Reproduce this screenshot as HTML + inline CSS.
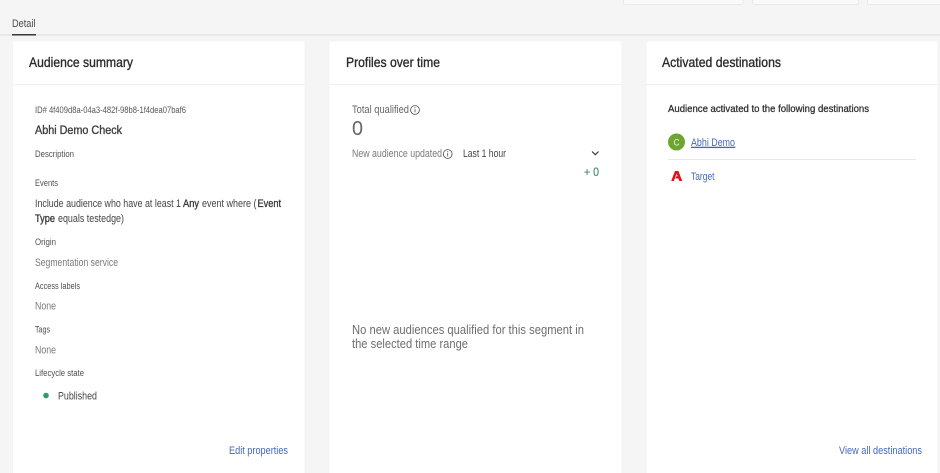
<!DOCTYPE html>
<html lang="en">
<head>
<meta charset="utf-8">
<title>Audience detail</title>
<style>
html,body{margin:0;padding:0;background:#f5f5f5;width:940px;height:473px;overflow:hidden}
svg{display:block;position:absolute;left:0;top:0}
text{font-family:"Liberation Sans",sans-serif;white-space:pre}
.t{filter:blur(.35px)}
.h{font-size:14px;fill:#2c2c2c;stroke:#2c2c2c;stroke-width:.35}
.l{font-size:9.6px;fill:#4f4f4f}
.v{font-size:10.8px;fill:#7a7a7a}
.b{font-size:10.8px;fill:#444}
.m{font-size:10.8px;fill:#3c3c3c;stroke:#3c3c3c;stroke-width:.35}
.a{font-size:10.6px;fill:#4668b8}
</style>
</head>
<body>
<svg width="940" height="473" viewBox="0 0 940 473" xmlns="http://www.w3.org/2000/svg">
  <rect width="940" height="473" fill="#f5f5f5"/>

  <!-- top controls -->
  <rect x="623.5" y="-6" width="119.5" height="10.5" rx="2" fill="#fafafa" stroke="#e9e9e9"/>
  <rect x="752.5" y="-6" width="106" height="10.5" rx="2" fill="#fafafa" stroke="#e9e9e9"/>
  <rect x="867.5" y="-6" width="80" height="10.5" rx="2" fill="#fafafa" stroke="#e9e9e9"/>

  <!-- tab bar -->
  <rect x="0" y="34" width="940" height="2" fill="#e9e9e9"/>
  <rect x="12" y="34" width="24" height="1.5" fill="#3a3a3a"/>

  <!-- cards -->
  <rect x="12.5" y="41" width="292.5" height="440" rx="2" fill="#fff" stroke="#efefef" stroke-width=".6"/>
  <rect x="329" y="41" width="293" height="440" rx="2" fill="#fff" stroke="#efefef" stroke-width=".6"/>
  <rect x="646" y="41" width="292" height="440" rx="2" fill="#fff" stroke="#efefef" stroke-width=".6"/>
  <rect x="13" y="84" width="292" height="1" fill="#f0f0f0"/>
  <rect x="329" y="84" width="293" height="1" fill="#f0f0f0"/>
  <rect x="646" y="84" width="292" height="1" fill="#f0f0f0"/>

  <g class="t">
    <text x="12" y="27" font-size="11" fill="#4a4a4a" textLength="23.5" lengthAdjust="spacingAndGlyphs">Detail</text>

    <!-- Audience summary -->
    <text class="h" x="29" y="67" textLength="104" lengthAdjust="spacingAndGlyphs">Audience summary</text>
    <text x="35" y="113" font-size="9.2" fill="#555" textLength="151" lengthAdjust="spacingAndGlyphs">ID# 4f409d8a-04a3-482f-98b8-1f4dea07baf6</text>
    <text x="35" y="134" font-size="11.5" fill="#3e3e3e" stroke="#3e3e3e" stroke-width=".35" textLength="87" lengthAdjust="spacingAndGlyphs">Abhi Demo Check</text>
    <text class="l" x="35" y="157" textLength="39" lengthAdjust="spacingAndGlyphs">Description</text>
    <text class="l" x="35" y="186" textLength="23" lengthAdjust="spacingAndGlyphs">Events</text>
    <text class="b" x="35" y="207" textLength="146" lengthAdjust="spacingAndGlyphs">Include audience who have at least 1</text>
    <text class="m" x="183" y="207" textLength="16" lengthAdjust="spacingAndGlyphs">Any</text>
    <text class="b" x="202" y="207" textLength="54.5" lengthAdjust="spacingAndGlyphs">event where (</text>
    <text class="m" x="257.5" y="207" textLength="23.5" lengthAdjust="spacingAndGlyphs">Event</text>
    <text class="m" x="35" y="222" textLength="20" lengthAdjust="spacingAndGlyphs">Type</text>
    <text class="b" x="58" y="222" textLength="66" lengthAdjust="spacingAndGlyphs">equals testedge)</text>
    <text class="l" x="35" y="245" textLength="21" lengthAdjust="spacingAndGlyphs">Origin</text>
    <text class="v" x="35" y="266" textLength="83" lengthAdjust="spacingAndGlyphs">Segmentation service</text>
    <text class="l" x="35" y="289" textLength="45" lengthAdjust="spacingAndGlyphs">Access labels</text>
    <text class="v" x="35" y="309.5" textLength="21" lengthAdjust="spacingAndGlyphs">None</text>
    <text class="l" x="35" y="332.5" textLength="15" lengthAdjust="spacingAndGlyphs">Tags</text>
    <text class="v" x="35" y="353.5" textLength="21" lengthAdjust="spacingAndGlyphs">None</text>
    <text class="l" x="35" y="376" textLength="49" lengthAdjust="spacingAndGlyphs">Lifecycle state</text>
    <circle cx="46" cy="395.5" r="2.8" fill="#2d9d63"/>
    <text class="b" x="58" y="399.5" textLength="39" lengthAdjust="spacingAndGlyphs">Published</text>
    <text class="a" x="229" y="454" textLength="59" lengthAdjust="spacingAndGlyphs">Edit properties</text>

    <!-- Profiles over time -->
    <text class="h" x="346" y="67" textLength="94" lengthAdjust="spacingAndGlyphs">Profiles over time</text>
    <text x="352" y="113" font-size="10.8" fill="#666" textLength="57" lengthAdjust="spacingAndGlyphs">Total qualified</text>
    <g fill="none" stroke="#444" stroke-width=".8">
      <circle cx="415" cy="110" r="4.4"/>
      <path d="M415 109.2v3.2M415 107.2v1"/>
      <circle cx="447.7" cy="154" r="4.4"/>
      <path d="M447.7 153.2v3.2M447.7 151.2v1"/>
    </g>
    <text x="352" y="135" font-size="20" fill="#666" textLength="11" lengthAdjust="spacingAndGlyphs">0</text>
    <text x="352" y="157" font-size="10.8" fill="#7a7a7a" textLength="90" lengthAdjust="spacingAndGlyphs">New audience updated</text>
    <text class="b" x="463" y="157" textLength="43" lengthAdjust="spacingAndGlyphs">Last 1 hour</text>
    <path d="M592 151.5l3.3 3.2 3.3-3.2" fill="none" stroke="#333" stroke-width="1.2"/>
    <text x="584" y="176" font-size="11.5" fill="#4f8f7b" stroke="#4f8f7b" stroke-width=".25" textLength="15" lengthAdjust="spacingAndGlyphs">+ 0</text>
    <text x="352" y="334" font-size="13" fill="#6e6e6e" textLength="232" lengthAdjust="spacingAndGlyphs">No new audiences qualified for this segment in</text>
    <text x="352" y="348" font-size="13" fill="#6e6e6e" textLength="116" lengthAdjust="spacingAndGlyphs">the selected time range</text>

    <!-- Activated destinations -->
    <text class="h" x="662" y="67" textLength="119" lengthAdjust="spacingAndGlyphs">Activated destinations</text>
    <text x="668" y="112" font-size="10.2" fill="#333" stroke="#333" stroke-width=".3" textLength="201" lengthAdjust="spacingAndGlyphs">Audience activated to the following destinations</text>
    <circle cx="676.5" cy="142" r="8.5" fill="#6ca62f"/>
    <text x="673.5" y="145.5" font-size="9" fill="#fff" opacity=".85" textLength="6" lengthAdjust="spacingAndGlyphs">C</text>
    <rect x="691" y="146" width="45" height="2" fill="#c9d6f0"/>
    <text class="a" x="691" y="146" textLength="44" lengthAdjust="spacingAndGlyphs" text-decoration="underline">Abhi Demo</text>
    <rect x="668" y="159" width="248" height="1" fill="#e8e8e8"/>
    <path transform="translate(671.2 171)" d="M3.8 0H7.2L11 10H8.2L7.3 7.5H4.2L5.2 5.3H6.5L5.5 2.6 2.7 10H0z" fill="#e1101a"/>
    <text class="a" x="691" y="180" textLength="23.5" lengthAdjust="spacingAndGlyphs">Target</text>
    <text class="a" x="839" y="454" textLength="83" lengthAdjust="spacingAndGlyphs">View all destinations</text>
  </g>
</svg>
</body>
</html>
